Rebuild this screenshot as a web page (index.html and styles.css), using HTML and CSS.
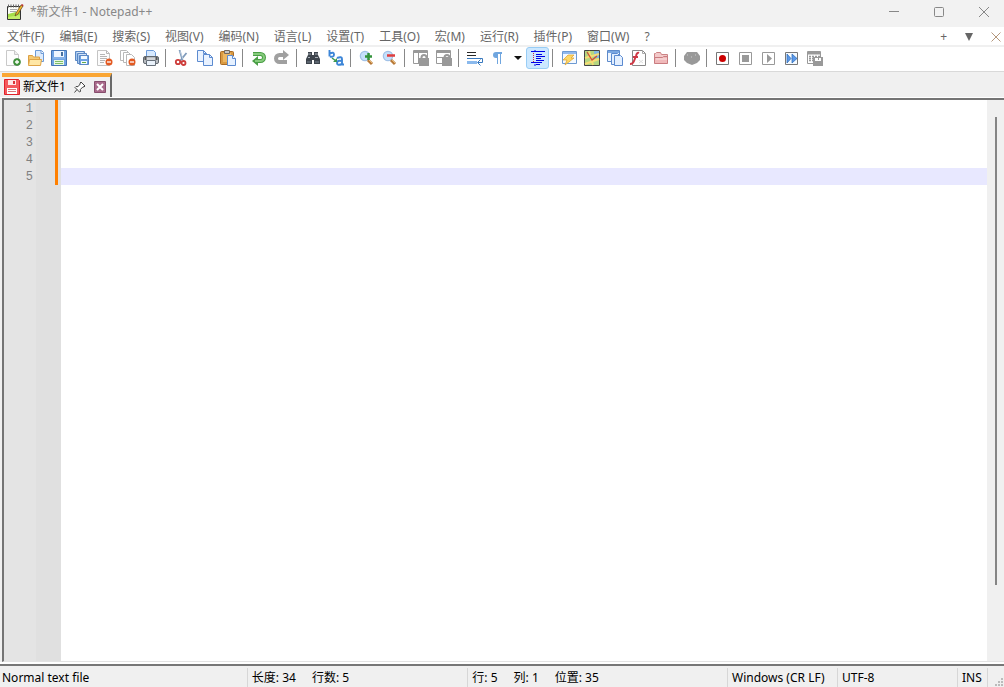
FILE: index.html
```html
<!DOCTYPE html>
<html lang="zh-CN">
<head>
<meta charset="utf-8">
<meta name="viewport" content="width=device-width, initial-scale=1">
<title>*新文件1 - Notepad++</title>
<link rel="stylesheet" href="styles.css">
</head>
<body>
<div class="app">
  <header class="titlebar">
    <svg class="logo" viewBox="0 0 18 18"><path d="M1.500 3.500h13v13h-13z" fill="#fcfdf8" stroke="#333"/><path d="M2 11l12-3v8H2z" fill="#a4dd48"/><path d="M2 14l12-2v4H2z" fill="#c3ee6a"/><path d="M4 6.500h7M4 8.500h6" stroke="#aaa"/><path d="M2.500 1.500v3M5 1.500v3M7.500 1.500v3M10 1.500v3M12.500 1.500v3" stroke="#666"/><path d="M9 13l1-3 5-8 2 1-5 8z" fill="#efb52a" stroke="#594020" stroke-width=".7"/><path d="M15 2l1-1 1.500 1-.5 1.500z" fill="#bd3030"/></svg>
    <h1 class="title">*新文件1 - Notepad++</h1>
    <div class="window-buttons">
      <button class="window-button" aria-label="最小化"><svg viewBox="0 0 12 12"><path d="M1 5.500h10" /></svg></button>
      <button class="window-button" aria-label="最大化"><svg viewBox="0 0 12 12"><rect x="1.500" y="1.500" width="9" height="9" rx="1"/></svg></button>
      <button class="window-button" aria-label="关闭"><svg viewBox="0 0 12 12"><path d="M1 1l10 10M11 1L1 11"/></svg></button>
    </div>
  </header>
  <nav class="menubar">
    <button class="menu">文件(F)</button><button class="menu">编辑(E)</button><button class="menu">搜索(S)</button><button class="menu">视图(V)</button><button class="menu">编码(N)</button><button class="menu">语言(L)</button><button class="menu">设置(T)</button><button class="menu">工具(O)</button><button class="menu">宏(M)</button><button class="menu">运行(R)</button><button class="menu">插件(P)</button><button class="menu">窗口(W)</button><button class="menu">?</button>
    <div class="menu-actions">
      <button class="action">+</button>
      <button class="action" aria-label="文档列表"><svg class="down" viewBox="0 0 8 8"><path d="M0 0h8L4 8z" fill="#666"/></svg></button>
      <button class="action" aria-label="关闭文档"><svg class="doc-close" viewBox="0 0 10 10"><path d="M.5.5l9 9M9.500.5l-9 9" stroke="#b5977c"/></svg></button>
    </div>
  </nav>
  <div class="toolbar" role="toolbar" aria-label="工具栏">
    <button class="tool" aria-label="新建"><svg viewBox="0 0 16 16"><path d="M1.500.5h8l4 4v11h-12z" fill="#fdfdfd" stroke="#c9c9c9"/><path d="M9.500.5v4h4" fill="#eee" stroke="#c9c9c9"/><circle cx="12" cy="12" r="3.500" fill="#46983f" stroke="#2b7a2b" stroke-width=".6"/><path d="M12 10v4M10 12h4" stroke="#fff" stroke-width="1.300"/></svg></button>
    <button class="tool" aria-label="打开"><svg viewBox="0 0 16 16"><path d="M7.500.5h6l2 2v9h-8z" fill="#dbeafc" stroke="#6c9ad6"/><path d="M13 .5v3h2.500" fill="#fff" stroke="#6c9ad6"/><path d="M.5 14V5.500h4l1 1.500h6V14z" fill="#f5ca72" stroke="#dca044"/><path d="M.5 15.500l1-6h12l-1 6z" fill="#ffe7a5" stroke="#dfa346"/></svg></button>
    <button class="tool" aria-label="保存"><svg viewBox="0 0 16 16"><path d="M.5.5h15v15h-15z" fill="#6fa3e4" stroke="#4474b4"/><path d="M3 1h10v6H3z" fill="#eef6ff"/><path d="M10 2h2v4h-2z" fill="#4770a0"/><path d="M3 10h10v5H3z" fill="#e9f8e3"/><path d="M4 11.500h8M4 13.500h8" stroke="#7dbd68"/><path d="M2 8h12" stroke="#9cc1ee"/></svg></button>
    <button class="tool" aria-label="全部保存"><svg viewBox="0 0 16 16"><g stroke="#5b88c4"><path d="M1.500 1.500h9v9h-9z" fill="#a5c7ef"/><path d="M3 3h6" stroke="#fff"/><path d="M3.500 3.500h9v10h-9z" fill="#a5c7ef"/><path d="M5 5h7" stroke="#fff"/><path d="M5.500 5.500h9v9h-9z" fill="#6fa3e4"/></g><path d="M7 6h6v3H7zM7 11h6v3H7z" fill="#f2faff"/><path d="M8 12.500h4" stroke="#61ad4a"/></svg></button>
    <button class="tool" aria-label="关闭"><svg viewBox="0 0 16 16"><path d="M.5.5h9l3 3v12H.5z" fill="#fcfcfc" stroke="#c4c4c4"/><path d="M9.500.5v3h3M3 4.500h5M3 6.500h7M3 8.500h7M3 10.500h5M3 12.500h4" fill="none" stroke="#b5b5b5"/><circle cx="12" cy="12" r="3.500" fill="#e35a22"/><path d="M10 12h4" stroke="#fff" stroke-width="1.300"/></svg></button>
    <button class="tool" aria-label="全部关闭"><svg viewBox="0 0 16 16"><g fill="#fff" stroke="#b8b8b8"><path d="M.5.5h6l2 2v8h-8z"/><path d="M3.500 2.500h5l2 2v8h-7z"/><path d="M6.500 4.500h5l3 3v8h-8z"/></g><circle cx="12" cy="12" r="3.500" fill="#e35a22"/><path d="M10 12h4" stroke="#fff" stroke-width="1.300"/></svg></button>
    <button class="tool" aria-label="打印"><svg viewBox="0 0 16 16"><path d="M3.500 7V.5h7l2 2V7z" fill="#d8eaff" stroke="#6c9ad8"/><rect x=".5" y="6.500" width="15" height="7" rx="1.500" fill="#b9bdc2" stroke="#626970"/><path d="M2 9h12" stroke="#eee"/><path d="M3.500 10.500h9v5h-9z" fill="#eaf2fb" stroke="#68717b"/><path d="M2.500 7v3M13.500 7v3" stroke="#555" stroke-width="2"/></svg></button>
    <span class="separator"></span>
    <button class="tool" aria-label="剪切"><svg viewBox="0 0 16 16"><path d="M5.500 0l3 10M12.500 3L6 11" stroke="#7f9bbb" stroke-width="1.800"/><path d="M6 1l3 8" stroke="#e3edf7" stroke-width=".6"/><circle cx="4" cy="12" r="2.200" fill="none" stroke="#ce3d3b" stroke-width="1.800"/><circle cx="9.500" cy="13" r="2" fill="none" stroke="#ce3d3b" stroke-width="1.800"/></svg></button>
    <button class="tool" aria-label="复制"><svg viewBox="0 0 16 16"><g fill="#e9f2ff" stroke="#5c8bd0"><path d="M.5.5h6l3 3v8h-9z"/><path d="M6.500.5v3h3" fill="none"/><path d="M6.500 4.500h6l3 3v8h-9z"/><path d="M12.500 4.500v3h3" fill="none"/></g></svg></button>
    <button class="tool" aria-label="粘贴"><svg viewBox="0 0 16 16"><rect x=".5" y="1.500" width="13" height="13" rx="1" fill="#d99a42" stroke="#aa6b25"/><path d="M3 3h8v9H3z" fill="#edb763"/><path d="M4.500.5h5v3h-5z" fill="#c7c7c7" stroke="#75685b"/><path d="M7.500 5.500h5l3 3v7h-8z" fill="#e6f1ff" stroke="#5c8bd0"/><path d="M12.500 5.500v3h3" fill="#fff" stroke="#5c8bd0"/></svg></button>
    <span class="separator"></span>
    <button class="tool" aria-label="撤销"><svg viewBox="0 0 16 16"><path d="M2 4h7.500a3.500 3.500 0 0 1 0 7H6" fill="none" stroke="#4a9e46" stroke-width="4"/><path d="M7 6v10l-6-5z" fill="#4a9e46"/><path d="M2 4h7.500a3.500 3.500 0 0 1 0 7H4" fill="none" stroke="#86cb7c" stroke-width="2"/></svg></button>
    <button class="tool" aria-label="重做"><svg viewBox="0 0 16 16"><path d="M10 5H5.500a3.500 3.500 0 0 0 0 7H13" fill="none" stroke="#a0a0a0" stroke-width="4"/><path d="M9 0v10l6-5z" fill="#a0a0a0"/></svg></button>
    <span class="separator"></span>
    <button class="tool" aria-label="查找"><svg viewBox="0 0 16 16"><path d="M3 2h4v3h2V2h4v3l2 4v5H9v-4H7v4H1V9l2-4z" fill="#3e454d"/><path d="M3 4h3M10 4h3M3 7.500h2M10 7.500h3" stroke="#a6adb5"/><path d="M2 12h4M10 12h4" stroke="#798592"/></svg></button>
    <button class="tool" aria-label="替换"><svg viewBox="0 0 16 16"><g fill="none" stroke="#3d86d8" stroke-width="1.900"><path d="M1.500 0v6.500M2 3.500q4-2 4 1T2 6.500"/><path d="M9 8q5-2 5 1v5.500h2M14 11q-5-1-5 2t5 1"/></g><path d="M4 8l4 3" stroke="#3d9950" stroke-width="1.500"/><path d="M9 8v4H5z" fill="#3d9950"/></svg></button>
    <span class="separator"></span>
    <button class="tool" aria-label="放大"><svg viewBox="0 0 16 16"><circle cx="6" cy="6" r="4.700" fill="#c6e0fb" stroke="#a2c2e7" stroke-width="1.200"/><path d="M9 10l4 4" stroke="#b77939" stroke-width="3"/><path d="M10 10l3 3" stroke="#e9bb77"/><path d="M9.500 3v7M6 6.500h7" stroke="#33943b" stroke-width="2.500"/></svg></button>
    <button class="tool" aria-label="缩小"><svg viewBox="0 0 16 16"><circle cx="6" cy="6" r="4.700" fill="#c6e0fb" stroke="#a2c2e7" stroke-width="1.200"/><path d="M9 10l4 4" stroke="#b77939" stroke-width="3"/><path d="M10 10l3 3" stroke="#e9bb77"/><path d="M5 5.500h8" stroke="#df3e3e" stroke-width="2.500"/></svg></button>
    <span class="separator"></span>
    <button class="tool" aria-label="同步垂直滚动"><svg viewBox="0 0 16 16"><path d="M.5.5h14v13H.5zM5.500 2v11" fill="#fff" stroke="#999"/><path d="M1 2h13" stroke="#999" stroke-width="2"/><path d="M6 8h10v8H6z" fill="#999"/><path d="M8.500 9V7.500a2.500 2.500 0 0 1 5 0V9" fill="none" stroke="#999" stroke-width="2"/></svg></button>
    <button class="tool" aria-label="同步水平滚动"><svg viewBox="0 0 16 16"><path d="M.5.5h14v13H.5zM1 7.500h13" fill="#fff" stroke="#999"/><path d="M1 2h13" stroke="#999" stroke-width="2"/><path d="M6 8h10v8H6z" fill="#999"/><path d="M8.500 9V7.500a2.500 2.500 0 0 1 5 0V9" fill="none" stroke="#999" stroke-width="2"/></svg></button>
    <span class="separator"></span>
    <button class="tool" aria-label="自动换行"><svg viewBox="0 0 16 16"><path d="M0 2.500h9M0 5.500h9" stroke="#282828"/><path d="M0 8.500h15.500v4H11" fill="none" stroke="#3979be"/><path d="M0 12.500h10" stroke="#8ab9ed" stroke-width="3"/><path d="M13.500 9.500l-3 3 3 3" fill="none" stroke="#3979be"/></svg></button>
    <button class="tool" aria-label="显示所有字符"><svg viewBox="0 0 16 16"><path d="M12 2H6a3 3 0 0 0 0 6h1v6h1V4h2v10h1V4h1z" fill="#70a6df"/></svg></button>
    <button class="tool tool-drop" aria-label="符号选项"><svg class="drop" viewBox="0 0 8 4"><path d="M0 0h8L4 4z" fill="#111"/></svg></button>
    <button class="tool tool-active" aria-label="显示缩进参考线" aria-pressed="true"><svg viewBox="0 0 16 16"><path d="M1 1.500h14M6 4.500h6M6 6.500h9M6 10.500h8M1 12.500h11" stroke="#0000e8"/><path d="M6 8.500h5M6 14.500h4" stroke="#0000e8"/><path d="M3.500 3v9" stroke="#cf2449" stroke-dasharray="1 1"/><path d="M5 0v1M5 14v2" stroke="#0000e8"/></svg></button>
    <span class="separator"></span>
    <button class="tool" aria-label="自定义语言"><svg viewBox="0 0 16 16"><path d="M1.500 1.500h14v12h-14z" fill="#f5faff" stroke="#6d9ad2"/><path d="M2 3h13" stroke="#91b9ed" stroke-width="2"/><path d="M7 5h6l-3 3h3L4 15l2-5H2z" fill="#ffd866" stroke="#dba02d" stroke-width=".7"/></svg></button>
    <button class="tool" aria-label="文档地图"><svg viewBox="0 0 16 16"><path d="M.5.5h15v15H.5z" fill="#b4d580" stroke="#444"/><path d="M10 1h5v7h-5z" fill="#82b7df"/><path d="M1 8l14-4M5 1l4 14M1 14l14-5" stroke="#f7dc74" stroke-width="2"/><path d="M3 2l5 8 5-4" fill="none" stroke="#d14e38" stroke-width="1.300"/></svg></button>
    <button class="tool" aria-label="文档列表"><svg viewBox="0 0 16 16"><path d="M.5.5h12v11H.5z" fill="#edf5ff" stroke="#5d8aca"/><path d="M1 2h11" stroke="#7aa7e1" stroke-width="2"/><g fill="#e3efff" stroke="#5b8ad0"><path d="M4.500 3.500h6l2 2v9h-8z"/><path d="M7.500 5.500h6l2 2v8h-8z"/></g></svg></button>
    <button class="tool" aria-label="函数列表"><svg viewBox="0 0 16 16"><path d="M2.500.5h10l3 3v12h-13z" fill="#fff" stroke="#888"/><path d="M12.500.5v3h3" fill="none" stroke="#aaa"/><path d="M9 3q-2-1-3 3l-2 5q-1 3-4 3M3 7h5" fill="none" stroke="#cf3845" stroke-width="2"/><path d="M9 10l4 3M13 10l-4 3" stroke="#ddd"/></svg></button>
    <button class="tool" aria-label="文件夹工作区"><svg viewBox="0 0 16 16"><path d="M1.500 13V3.500h1l1-1h4l1 2h6V13z" fill="#f3c9c9" stroke="#cc8385"/><path d="M1.500 13.500v-6h8l1-1h4v7z" fill="#f0b9ba" stroke="#c97c80"/><path d="M3 9h11" stroke="#fae4e4"/></svg></button>
    <span class="separator"></span>
    <button class="tool" aria-label="监视"><svg viewBox="0 0 16 16"><path d="M0 6l3-4h10l3 4v4l-3 3-5 2-5-2-3-3z" fill="#999"/><path d="M3 5h1M11 5h1M7 7h1" stroke="#ccc"/></svg></button>
    <span class="separator"></span>
    <button class="tool" aria-label="开始录制"><svg viewBox="0 0 16 16"><path d="M1.500 2.500h12v12h-12z" fill="#fff" stroke="#777"/><circle cx="7.500" cy="8.500" r="3.500" fill="#cc0000"/></svg></button>
    <button class="tool" aria-label="停止录制"><svg viewBox="0 0 16 16"><path d="M1.500 2.500h12v12h-12z" fill="#fff" stroke="#999"/><path d="M4 5h7v7H4z" fill="#999"/></svg></button>
    <button class="tool" aria-label="播放"><svg viewBox="0 0 16 16"><path d="M1.500 2.500h12v12h-12z" fill="#fff" stroke="#999"/><path d="M6 4v9l5-4.500z" fill="#999"/></svg></button>
    <button class="tool" aria-label="多次运行宏"><svg viewBox="0 0 16 16"><path d="M1.500 2.500h12v12h-12z" fill="#f5faff" stroke="#777"/><path d="M3 4v9l4-4.500zM8 4v9l5-4.500z" fill="#5c99e9" stroke="#2869b6" stroke-width=".7"/></svg></button>
    <button class="tool" aria-label="保存宏"><svg viewBox="0 0 16 16"><path d="M.5 1.500h13v12H.5z" fill="#fff" stroke="#999"/><path d="M1 3h12" stroke="#999" stroke-width="3"/><path d="M2 6.500h11M2 8.500h4M2 10.500h4" stroke="#999" stroke-width="1.500" stroke-dasharray="2 1"/><path d="M6 7h10v9H6z" fill="#999"/><path d="M8 8h6v3H8z" fill="#fff"/><path d="M11 8h1v2h-1z" fill="#999"/></svg></button>
  </div>
  <div class="tabbar">
    <div class="tab">
      <svg class="tab-save" viewBox="0 0 16 16"><path d="M.5.5h14l1 1v14H.5z" fill="#f4595c" stroke="#e0222a"/><path d="M4 1h8v5H4z" fill="#ffe5e5"/><path d="M9 2h2v3H9z" fill="#dc3337"/><path d="M3 9h10v6H3z" fill="#fff"/><path d="M4 10.500h8M4 12.500h8" stroke="#dd777a"/></svg>
      <span class="tab-name">新文件1</span>
      <button class="tab-button" aria-label="固定标签"><svg viewBox="0 0 12 12"><path d="M7 1l4 4-1 1-1-.2L6.300 8.500l.2 2L5.500 11 1 6.500l1-1 2 .2L6.200 3 6 2zM3 8.500L.5 11.500" fill="#fff" stroke="#444"/></svg></button>
      <button class="tab-button" aria-label="关闭标签"><svg viewBox="0 0 12 12"><path d="M.5.5h11v11H.5z" fill="#aa6b8c" stroke="#874e6d"/><path d="M3 3l6 6M9 3L3 9" stroke="#fff" stroke-width="2"/></svg></button>
    </div>
  </div>
  <main class="editor">
    <ol class="line-numbers"><li>1</li><li>2</li><li>3</li><li>4</li><li>5</li></ol>
    <div class="margin"><div class="changes"></div></div>
    <textarea class="text" aria-label="编辑区" spellcheck="false"></textarea>
    <div class="scrollbar"><div class="thumb"></div></div>
  </main>
  <footer class="statusbar">
    <span class="status doc-type">Normal text file</span>
    <span class="status doc-size"><span>长度: 34</span><span>行数: 5</span></span>
    <span class="status position"><span>行: 5</span><span>列: 1</span><span>位置: 35</span></span>
    <span class="status eol">Windows (CR LF)</span>
    <span class="status encoding">UTF-8</span>
    <span class="status mode">INS</span>
    <svg class="grip" viewBox="0 0 8 8"><path d="M6 0h2v2H6zM3 3h2v2H3zM6 3h2v2H6zM0 6h2v2H0zM3 6h2v2H3zM6 6h2v2H6z" fill="#bbb"/></svg>
  </footer>
</div>
</body>
</html>
```
FILE: styles.css
```css
* { box-sizing: border-box; }
body { margin: 0; font: 12px/18px "Noto Sans", "Noto Sans CJK SC", sans-serif; color: #000; }
button { margin: 0; padding: 0; border: 0; background: none; color: inherit; font: inherit; }
svg { display: block; flex: none; fill: none; }
.app { display: flex; flex-direction: column; height: 100vh; background: #f0f0f0; }
.titlebar { display: flex; align-items: center; height: 27px; padding: 0 0 4px 6px; background: #f2f2f2; color: #888; }
.logo { width: 18px; height: 18px; }
.title { margin: 0 0 0 6px; font-size: 12px; font-weight: 400; }
.window-buttons { display: flex; margin-left: auto; }
.window-button { display: grid; place-items: center; width: 45px; height: 23px; }
.window-button:last-child { width: 46px; margin-right: -4px; }
.window-buttons { padding-right: 1px; }
.window-button svg { width: 12px; height: 12px; stroke: #888; }
.menubar { display: flex; height: 20px; padding-top: 1px; background: #fff; border-bottom: 2px solid #f0f0f0; color: #666; }
.menu { height: 18px; padding: 0 8px 0 7px; white-space: nowrap; }
.menu-actions { display: flex; gap: 18px; align-items: center; margin-left: auto; padding-right: 3px; }
.down { width: 8px; height: 8px; }
.doc-close { width: 10px; height: 10px; }
.toolbar { display: flex; align-items: center; height: 25px; padding: 0 0 2px 1px; background: #fff; border-bottom: 1px solid #d9d9d9; }
.tool { display: grid; place-items: center; flex: none; width: 23px; height: 22px; }
.tool svg { width: 16px; height: 16px; }
.tool-drop { width: 17px; }
.tool .drop { width: 8px; height: 4px; }
.tool-active { border: 1px solid #99cdf5; border-radius: 3px; background: #cce8ff; }
.separator { flex: none; width: 8px; height: 18px; background: linear-gradient(#888, #888) 3px 0 / 1px 100% no-repeat; }
.tabbar { display: flex; height: 26px; padding: 1px 0 0 2px; border-bottom: 1px solid #fff; }
.tab { display: flex; align-items: center; gap: 8px; height: 24px; padding: 0 4px 0 2px; border-top: 4px solid #faa634; border-right: 2px solid #696969; background: #f0f0f0; }
.tab-save { width: 16px; height: 16px; }
.tab-name { margin-left: -5px; }
.tab-button svg { width: 12px; height: 12px; }
.editor { display: flex; flex: 1; min-height: 0; margin: 0 0 2px 2px; border-top: 2px solid #747474; border-left: 2px solid #747474; border-bottom: 1px solid #e3e3e3; }
.line-numbers { width: 32px; margin: 0; padding: 0 3px 0 0; list-style: none; background: #e4e4e4; color: #808080; font: 12px/18px "Liberation Mono", monospace; text-align: right; }
.line-numbers li { height: 17px; }
.margin { display: flex; justify-content: flex-end; width: 25px; padding-right: 3px; background: #e0e0e0; }
.changes { width: 3px; height: 85px; background: #ff8000; }
.text { flex: 1; min-width: 0; padding: 0; border: 0; outline: 0; resize: none; background: #fff linear-gradient(#e8e8ff, #e8e8ff) 0 68px / 100% 17px no-repeat; font: 13px/17px "Liberation Mono", monospace; }
.scrollbar { display: flex; justify-content: center; width: 17px; padding-top: 17px; background: #f0f0f0; }
.thumb { width: 2px; height: 86%; background: #858585; }
.statusbar { display: flex; height: 23px; border-top: 2px solid #777; box-shadow: 0 -2px 0 #fff; }
.status { display: flex; gap: 16px; align-items: center; margin-top: 2px; padding-left: 4px; border-right: 1px solid #d7d7d7; white-space: nowrap; }
.doc-type { flex: 250 1 0; padding-left: 2px; }
.doc-size { flex: 220 1 0; }
.position { flex: 260 1 0; }
.eol { width: 110px; }
.encoding { width: 120px; }
.mode { width: 30px; }
.grip { width: 8px; height: 8px; margin: auto 1px 1px 7px; }
```
